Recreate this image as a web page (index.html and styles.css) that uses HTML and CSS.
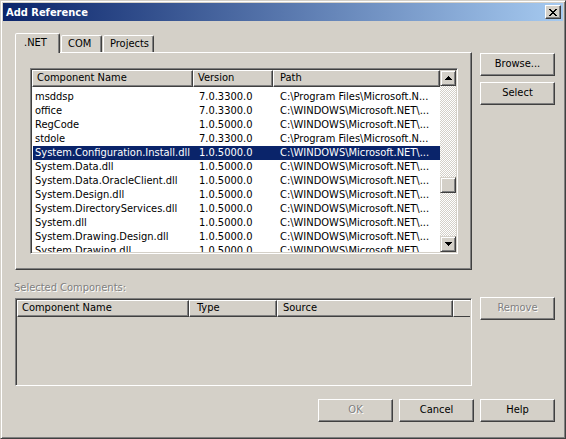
FILE: index.html
```html
<!DOCTYPE html>
<html>
<head>
<meta charset="utf-8">
<title>Add Reference</title>
<link rel="stylesheet" href="styles.css">
</head>
<body>
<div class="window">
  <div class="titlebar">
    <span class="title">Add Reference</span>
    <span class="close-btn">
      <svg width="8" height="7" viewBox="0 0 8 7" shape-rendering="crispEdges"><path fill="#000" d="M0 0h2v1h-2zM6 0h2v1h-2zM1 1h2v1h-2zM5 1h2v1h-2zM2 2h4v1h-4zM3 3h2v1h-2zM2 4h4v1h-4zM1 5h2v1h-2zM5 5h2v1h-2zM0 6h2v1h-2zM6 6h2v1h-2z"/></svg>
    </span>
  </div>
  <div class="body">
    <div class="tabs">
      <div class="tabstrip">
        <div class="tab active">.NET</div>
        <div class="tab">COM</div>
        <div class="tab">Projects</div>
      </div>
      <div class="panel">
        <div class="listview">
          <div class="lv-main">
            <div class="lv-header">
              <div class="hcell c1">Component Name</div>
              <div class="hcell c2">Version</div>
              <div class="hcell c3">Path</div>
            </div>
            <div class="lv-rows">
              <div class="row"><span class="r1">msddsp</span><span class="r2">7.0.3300.0</span><span class="r3">C:\Program Files\Microsoft.N...</span></div>
              <div class="row"><span class="r1">office</span><span class="r2">7.0.3300.0</span><span class="r3">C:\WINDOWS\Microsoft.NET\...</span></div>
              <div class="row"><span class="r1">RegCode</span><span class="r2">1.0.5000.0</span><span class="r3">C:\WINDOWS\Microsoft.NET\...</span></div>
              <div class="row"><span class="r1">stdole</span><span class="r2">7.0.3300.0</span><span class="r3">C:\Program Files\Microsoft.N...</span></div>
              <div class="row selected"><span class="r1">System.Configuration.Install.dll</span><span class="r2">1.0.5000.0</span><span class="r3">C:\WINDOWS\Microsoft.NET\...</span></div>
              <div class="row"><span class="r1">System.Data.dll</span><span class="r2">1.0.5000.0</span><span class="r3">C:\WINDOWS\Microsoft.NET\...</span></div>
              <div class="row"><span class="r1">System.Data.OracleClient.dll</span><span class="r2">1.0.5000.0</span><span class="r3">C:\WINDOWS\Microsoft.NET\...</span></div>
              <div class="row"><span class="r1">System.Design.dll</span><span class="r2">1.0.5000.0</span><span class="r3">C:\WINDOWS\Microsoft.NET\...</span></div>
              <div class="row"><span class="r1">System.DirectoryServices.dll</span><span class="r2">1.0.5000.0</span><span class="r3">C:\WINDOWS\Microsoft.NET\...</span></div>
              <div class="row"><span class="r1">System.dll</span><span class="r2">1.0.5000.0</span><span class="r3">C:\WINDOWS\Microsoft.NET\...</span></div>
              <div class="row"><span class="r1">System.Drawing.Design.dll</span><span class="r2">1.0.5000.0</span><span class="r3">C:\WINDOWS\Microsoft.NET\...</span></div>
              <div class="row"><span class="r1">System.Drawing.dll</span><span class="r2">1.0.5000.0</span><span class="r3">C:\WINDOWS\Microsoft.NET\...</span></div>
            </div>
          </div>
          <div class="scrollbar">
            <div class="sb-btn">
              <svg width="7" height="4" viewBox="0 0 7 4" shape-rendering="crispEdges"><path fill="#000" d="M3 0h1v1h-1zM2 1h3v1h-3zM1 2h5v1h-5zM0 3h7v1h-7z"/></svg>
            </div>
            <div class="sb-track"><div class="sb-thumb"></div></div>
            <div class="sb-btn">
              <svg width="7" height="4" viewBox="0 0 7 4" shape-rendering="crispEdges"><path fill="#000" d="M0 0h7v1h-7zM1 1h5v1h-5zM2 2h3v1h-3zM3 3h1v1h-1z"/></svg>
            </div>
          </div>
        </div>
      </div>
    </div>

    <div class="side">
      <div class="btn">Browse...</div>
      <div class="btn">Select</div>
    </div>

    <div class="selected-section">
      <div class="label disabled">Selected Components:</div>
      <div class="sel-list">
        <div class="lv-header">
          <div class="hcell s1">Component Name</div>
          <div class="hcell s2">Type</div>
          <div class="hcell s3">Source</div>
          <div class="hcell s4"></div>
        </div>
      </div>
    </div>

    <div class="side2">
      <div class="btn disabled">Remove</div>
    </div>

    <div class="footer">
      <div class="btn disabled">OK</div>
      <div class="btn">Cancel</div>
      <div class="btn">Help</div>
    </div>
  </div>
</div>
</body>
</html>
```

FILE: styles.css
```css
* { box-sizing: border-box; }
html, body { margin: 0; padding: 0; }
body {
  width: 566px;
  height: 439px;
  overflow: hidden;
  background: #D4D0C8;
  font-family: "DejaVu Sans Condensed", "DejaVu Sans", sans-serif;
  font-stretch: condensed;
  font-size: 11px;
  color: #000;
}

.window {
  width: 566px;
  height: 439px;
  background: #D4D0C8;
  border: 1px solid;
  border-color: #D4D0C8 #404040 #404040 #D4D0C8;
  box-shadow: inset 1px 1px #fff, inset -1px -1px #808080;
  padding: 2px;
  display: flex;
  flex-direction: column;
}

.titlebar {
  height: 18px;
  flex: none;
  background: linear-gradient(to right, #0A246A, #A6CAF0);
  display: flex;
  align-items: center;
  justify-content: space-between;
  padding: 0 2px 0 3px;
}
.title {
  color: #fff;
  font-weight: bold;
  font-size: 11px;
  line-height: 13px;
}
.close-btn {
  width: 16px;
  height: 14px;
  background: #D4D0C8;
  border: 1px solid;
  border-color: #fff #404040 #404040 #fff;
  box-shadow: inset -1px -1px #808080;
  display: flex;
  align-items: center;
  justify-content: center;
  padding-right: 1px;
}
.close-btn svg { display: block; }

.body {
  flex: 1;
  display: grid;
  grid-template-columns: 457px 75px;
  grid-template-rows: auto auto auto;
  grid-template-areas:
    "tabs side"
    "sel side2"
    "footer footer";
  column-gap: 8px;
  align-content: start;
  padding: 12px 0 0 12px;
}

/* Tabs */
.tabs { grid-area: tabs; }
.tabstrip {
  height: 19px;
  display: flex;
  align-items: flex-end;
  padding-left: 2px;
  position: relative;
  z-index: 1;
}
.tab {
  height: 17px;
  line-height: 15px;
  padding: 0 6px;
  border: 1px solid;
  border-bottom: none;
  border-color: #fff #404040 transparent #fff;
  box-shadow: inset -1px 0 #808080;
  border-radius: 2px 2px 0 0;
  background: #D4D0C8;
  white-space: nowrap;
}
.tab.active {
  height: 20px;
  margin: 0 -1px -1px -2px;
  padding: 0 9px 0 8px;
  line-height: 17px;
}
.tab + .tab { margin-left: 0; }
.tab:nth-child(2) { width: 41px; margin-left: 2px; }
.tab:nth-child(3) { width: 51px; margin-left: 1px; }
.tab.active { width: 45px; }

.panel {
  height: 218px;
  border: 1px solid;
  border-color: #fff #404040 #404040 #fff;
  box-shadow: inset -1px -1px #808080;
  padding: 15px 0 0 14px;
}

/* List view */
.listview {
  width: 428px;
  height: 186px;
  border: 1px solid;
  border-color: #808080 #fff #fff #808080;
  box-shadow: inset 1px 1px #404040, inset -1px -1px #D4D0C8;
  padding: 1px;
  background: #fff;
  display: flex;
  overflow: hidden;
}
.lv-main {
  width: 408px;
  display: flex;
  flex-direction: column;
  overflow: hidden;
}
.lv-header {
  display: flex;
  height: 17px;
  flex: none;
}
.hcell {
  height: 17px;
  line-height: 14px;
  border: 1px solid;
  border-color: #fff #404040 #404040 #fff;
  box-shadow: inset -1px -1px #808080;
  background: #D4D0C8;
  padding-left: 4px;
  white-space: nowrap;
  overflow: hidden;
  flex: none;
}
.hcell.c1 { width: 161px; }
.hcell.c2 { width: 80px; }
.hcell.c3 { width: 167px; padding-left: 6px; }

.lv-rows {
  padding-top: 3px;
  overflow: hidden;
}
.row {
  display: flex;
  height: 14px;
  line-height: 14px;
  margin-left: 1px;
  width: 407px;
  white-space: nowrap;
}
.row span { overflow: hidden; flex: none; }
.r1 { width: 160px; padding-left: 2px; }
.r2 { width: 80px; padding-left: 6px; }
.r3 { width: 167px; padding-left: 7px; }
.row.selected {
  background: #0A246A;
  color: #fff;
}

.scrollbar {
  width: 16px;
  display: flex;
  flex-direction: column;
  flex: none;
}
.sb-btn {
  width: 16px;
  height: 16px;
  flex: none;
  background: #D4D0C8;
  border: 1px solid;
  border-color: #D4D0C8 #404040 #404040 #D4D0C8;
  box-shadow: inset 1px 1px #fff, inset -1px -1px #808080;
  display: flex;
  align-items: center;
  justify-content: center;
}
.sb-btn svg { display: block; }
.sb-track {
  flex: 1;
  background: repeating-conic-gradient(#D4D0C8 0 25%, #fff 0 50%) 0 0 / 2px 2px;
}
.sb-thumb {
  width: 16px;
  height: 16px;
  margin-top: 91px;
  background: #D4D0C8;
  border: 1px solid;
  border-color: #D4D0C8 #404040 #404040 #D4D0C8;
  box-shadow: inset 1px 1px #fff, inset -1px -1px #808080;
}

/* Right buttons */
.side {
  grid-area: side;
  padding-top: 20px;
  display: flex;
  flex-direction: column;
  gap: 6px;
}
.side2 {
  grid-area: side2;
  padding-top: 27px;
}
.btn {
  width: 75px;
  height: 23px;
  border: 1px solid;
  border-color: #fff #404040 #404040 #fff;
  box-shadow: inset -1px -1px #808080;
  background: #D4D0C8;
  text-align: center;
  line-height: 20px;
  white-space: nowrap;
}
.disabled {
  color: #808080;
  text-shadow: 1px 1px 0 #fff;
}

/* Selected components */
.selected-section {
  grid-area: sel;
  padding-top: 11px;
}
.label {
  line-height: 13px;
  height: 13px;
  margin-left: -1px;
}
.sel-list {
  margin-top: 4px;
  width: 457px;
  height: 88px;
  border: 1px solid;
  border-color: #808080 #fff #fff #808080;
  box-shadow: inset 1px 1px #404040, inset -1px -1px #D4D0C8;
  padding: 1px;
  background: #D4D0C8;
}
.hcell.s1 { width: 172px; padding-left: 4px; }
.hcell.s2 { width: 88px; padding-left: 7px; }
.hcell.s3 { width: 176px; padding-left: 5px; }
.hcell.s4 { width: 17px; box-shadow: none; border-right: none; }

.footer {
  grid-area: footer;
  justify-self: end;
  display: flex;
  gap: 6px;
  margin-top: 13px;
}
```
